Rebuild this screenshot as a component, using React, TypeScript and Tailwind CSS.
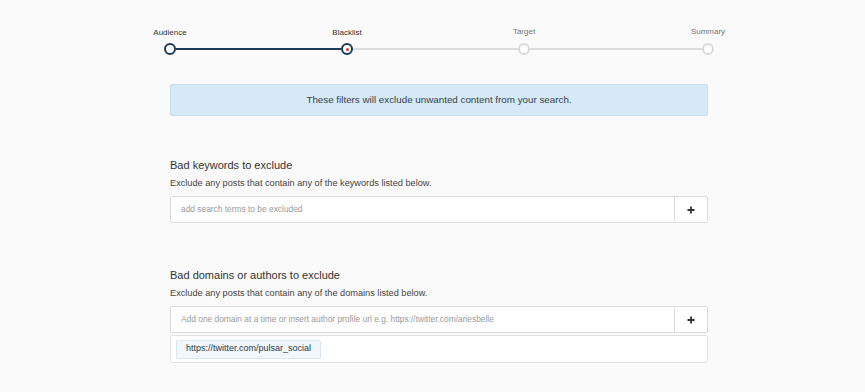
import React from "react";

const steps = [
  { label: "Audience", done: true },
  { label: "Blacklist", done: true, current: true },
  { label: "Target", done: false },
  { label: "Summary", done: false },
];

// gap between circles, the last segment is a bit longer
const lineWidths = ["", "w-[165px]", "w-[165px]", "flex-1"];

function Stepper() {
  return (
    <div className="flex items-end -mx-[6px]">
      {steps.map((step, i) => (
        <React.Fragment key={step.label}>
          {i > 0 && (
            <div
              className={`${lineWidths[i]} h-[2px] mb-[5px] ${
                step.done ? "bg-[#1d3a55]" : "bg-[#dcdcdc]"
              }`}
            />
          )}
          <div className="flex flex-col items-center w-3 shrink-0">
            <span
              className={
                step.done
                  ? "whitespace-nowrap text-[8px] leading-[10px] mb-[5px] text-[#333]"
                  : "whitespace-nowrap text-[8px] leading-[10px] mb-[6px] text-[#777]"
              }
            >
              {step.label}
            </span>
            <div
              className={
                step.done
                  ? "size-3 rounded-full border-2 border-[#1d3a55] bg-white flex items-center justify-center"
                  : "size-3 rounded-full border-2 border-[#d8d8d8] bg-white"
              }
            >
              {step.current && <div className="size-[3px] rounded-full bg-[#d0402b]" />}
            </div>
          </div>
        </React.Fragment>
      ))}
    </div>
  );
}

function AddInput({ placeholder }: { placeholder: string }) {
  return (
    <div className="flex h-[27px] bg-white border border-[#dcdcdc] rounded-[2px]">
      <input
        className="flex-1 px-[10px] text-[8.4px] text-[#333] placeholder:text-[#9a9a9a] outline-none bg-transparent"
        placeholder={placeholder}
      />
      <button className="w-[33px] border-l border-[#dcdcdc] flex items-center justify-center text-[#333]">
        <svg width="8" height="8" viewBox="0 0 8 8">
          <path d="M4 0.5v7M0.5 4h7" stroke="currentColor" strokeWidth="1.8" />
        </svg>
      </button>
    </div>
  );
}

export default function App() {
  return (
    <div
      className="w-[865px] h-[392px] bg-[#fafafa] overflow-hidden"
      style={{ fontFamily: "'Liberation Sans', Arial, sans-serif" }}
    >
      <div className="ml-[170px] w-[538px] pt-[27px]">
        <Stepper />

        <div className="mt-[29px] h-[32px] flex items-center justify-center bg-[#d5e9f6] border border-[#c4e0f1] rounded-[2px] text-[9.8px] text-[#34424f]">
          These filters will exclude unwanted content from your search.
        </div>

        <section className="mt-[42px]">
          <h3 className="text-[11px] leading-[14px] text-[#333]">Bad keywords to exclude</h3>
          <p className="mt-[5px] text-[9.2px] leading-[12px] text-[#444]">
            Exclude any posts that contain any of the keywords listed below.
          </p>
          <div className="mt-[7px]">
            <AddInput placeholder="add search terms to be excluded" />
          </div>
        </section>

        <section className="mt-[45px]">
          <h3 className="text-[11px] leading-[14px] text-[#333]">Bad domains or authors to exclude</h3>
          <p className="mt-[5px] text-[9.2px] leading-[12px] text-[#444]">
            Exclude any posts that contain any of the domains listed below.
          </p>
          <div className="mt-[7px]">
            <AddInput placeholder="Add one domain at a time or insert author profile url e.g. https://twitter.com/ariesbelle" />
          </div>
          <div className="mt-[2px] h-[28px] bg-white border border-[#e2e2e2] rounded-[2px] flex items-center px-[5px]">
            <span className="h-[19px] px-[9px] flex items-center bg-[#f1f7fc] border border-[#d9e7f2] rounded-[2px] text-[9px] text-[#2f3a44]">
              https://twitter.com/pulsar_social
            </span>
          </div>
        </section>
      </div>
    </div>
  );
}
